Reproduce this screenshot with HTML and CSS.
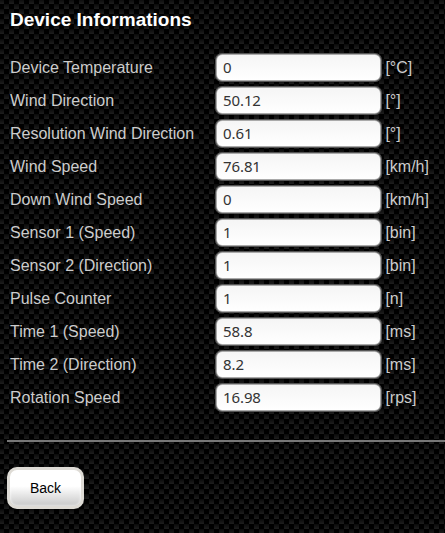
FILE: index.html
```
<!DOCTYPE html>
<html lang="en">
<head>
<meta charset="utf-8">
<title>Device Informations</title>
<link rel="stylesheet" href="styles.css">
</head>
<body>
<h1>Device Informations</h1>
<form>
<div class="row"><label for="f1">Device Temperature</label><input id="f1" value="0"><span>[°C]</span></div>
<div class="row"><label for="f2">Wind Direction</label><input id="f2" value="50.12"><span>[°]</span></div>
<div class="row"><label for="f3">Resolution Wind Direction</label><input id="f3" value="0.61"><span>[°]</span></div>
<div class="row"><label for="f4">Wind Speed</label><input id="f4" value="76.81"><span>[km/h]</span></div>
<div class="row"><label for="f5">Down Wind Speed</label><input id="f5" value="0"><span>[km/h]</span></div>
<div class="row"><label for="f6">Sensor 1 (Speed)</label><input id="f6" value="1"><span>[bin]</span></div>
<div class="row"><label for="f7">Sensor 2 (Direction)</label><input id="f7" value="1"><span>[bin]</span></div>
<div class="row"><label for="f8">Pulse Counter</label><input id="f8" value="1"><span>[n]</span></div>
<div class="row"><label for="f9">Time 1 (Speed)</label><input id="f9" value="58.8"><span>[ms]</span></div>
<div class="row"><label for="f10">Time 2 (Direction)</label><input id="f10" value="8.2"><span>[ms]</span></div>
<div class="row"><label for="f11">Rotation Speed</label><input id="f11" value="16.98"><span>[rps]</span></div>
<hr>
<button type="button">Back</button>
</form>
</body>
</html>
```
FILE: styles.css
```
* { box-sizing: border-box; }
html {
  background-color: #000;
  background-image:
    conic-gradient(from 0deg at 5px 5px, #000 25%, transparent 0 50%, #000 0 75%, transparent 0),
    linear-gradient(#0a0a0a, #1e1e1e);
  background-size: 10px 10px, 5px 5px;
  background-position: 4px 4px, 4px 4px;
}
body {
  margin: 0;
  padding: 9px 0 0 7px;
  height: 533px;
  overflow: hidden;
  font: 16px/22px "Liberation Sans", Arial, sans-serif;
  color: #ccc;
}
h1 {
  margin: 0 0 20px 3px;
  font-size: 19px;
  line-height: 22px;
  color: #fff;
}
.row {
  display: grid;
  grid-template-columns: 209px 165px 1fr;
  align-items: center;
  height: 33px;
}
label { padding-left: 3px; white-space: nowrap; }
.row span { padding-left: 4.4px; }
input {
  width: 165px;
  height: 27px;
  padding: 0 6px 1px;
  border: 1px solid #aaa;
  border-radius: 6px;
  background: linear-gradient(#f5f5f5, #fff);
  box-shadow: 0 0 0 1px #555;
  color: #333;
  font: 15px "Noto Sans", sans-serif;
  letter-spacing: -0.1px;
}
hr {
  height: 2px;
  margin: 26px 0 25px;
  border: 0;
  background: #777;
}
button {
  display: block;
  width: 77px;
  height: 42px;
  padding: 0;
  border: 3px solid #dedbd5;
  border-radius: 10px;
  background: linear-gradient(#fff 45%, #c8c8c8);
  box-shadow: inset 0 0 3px #fff;
  color: #000;
  font: 14px "Liberation Sans", Arial, sans-serif;
}
```
